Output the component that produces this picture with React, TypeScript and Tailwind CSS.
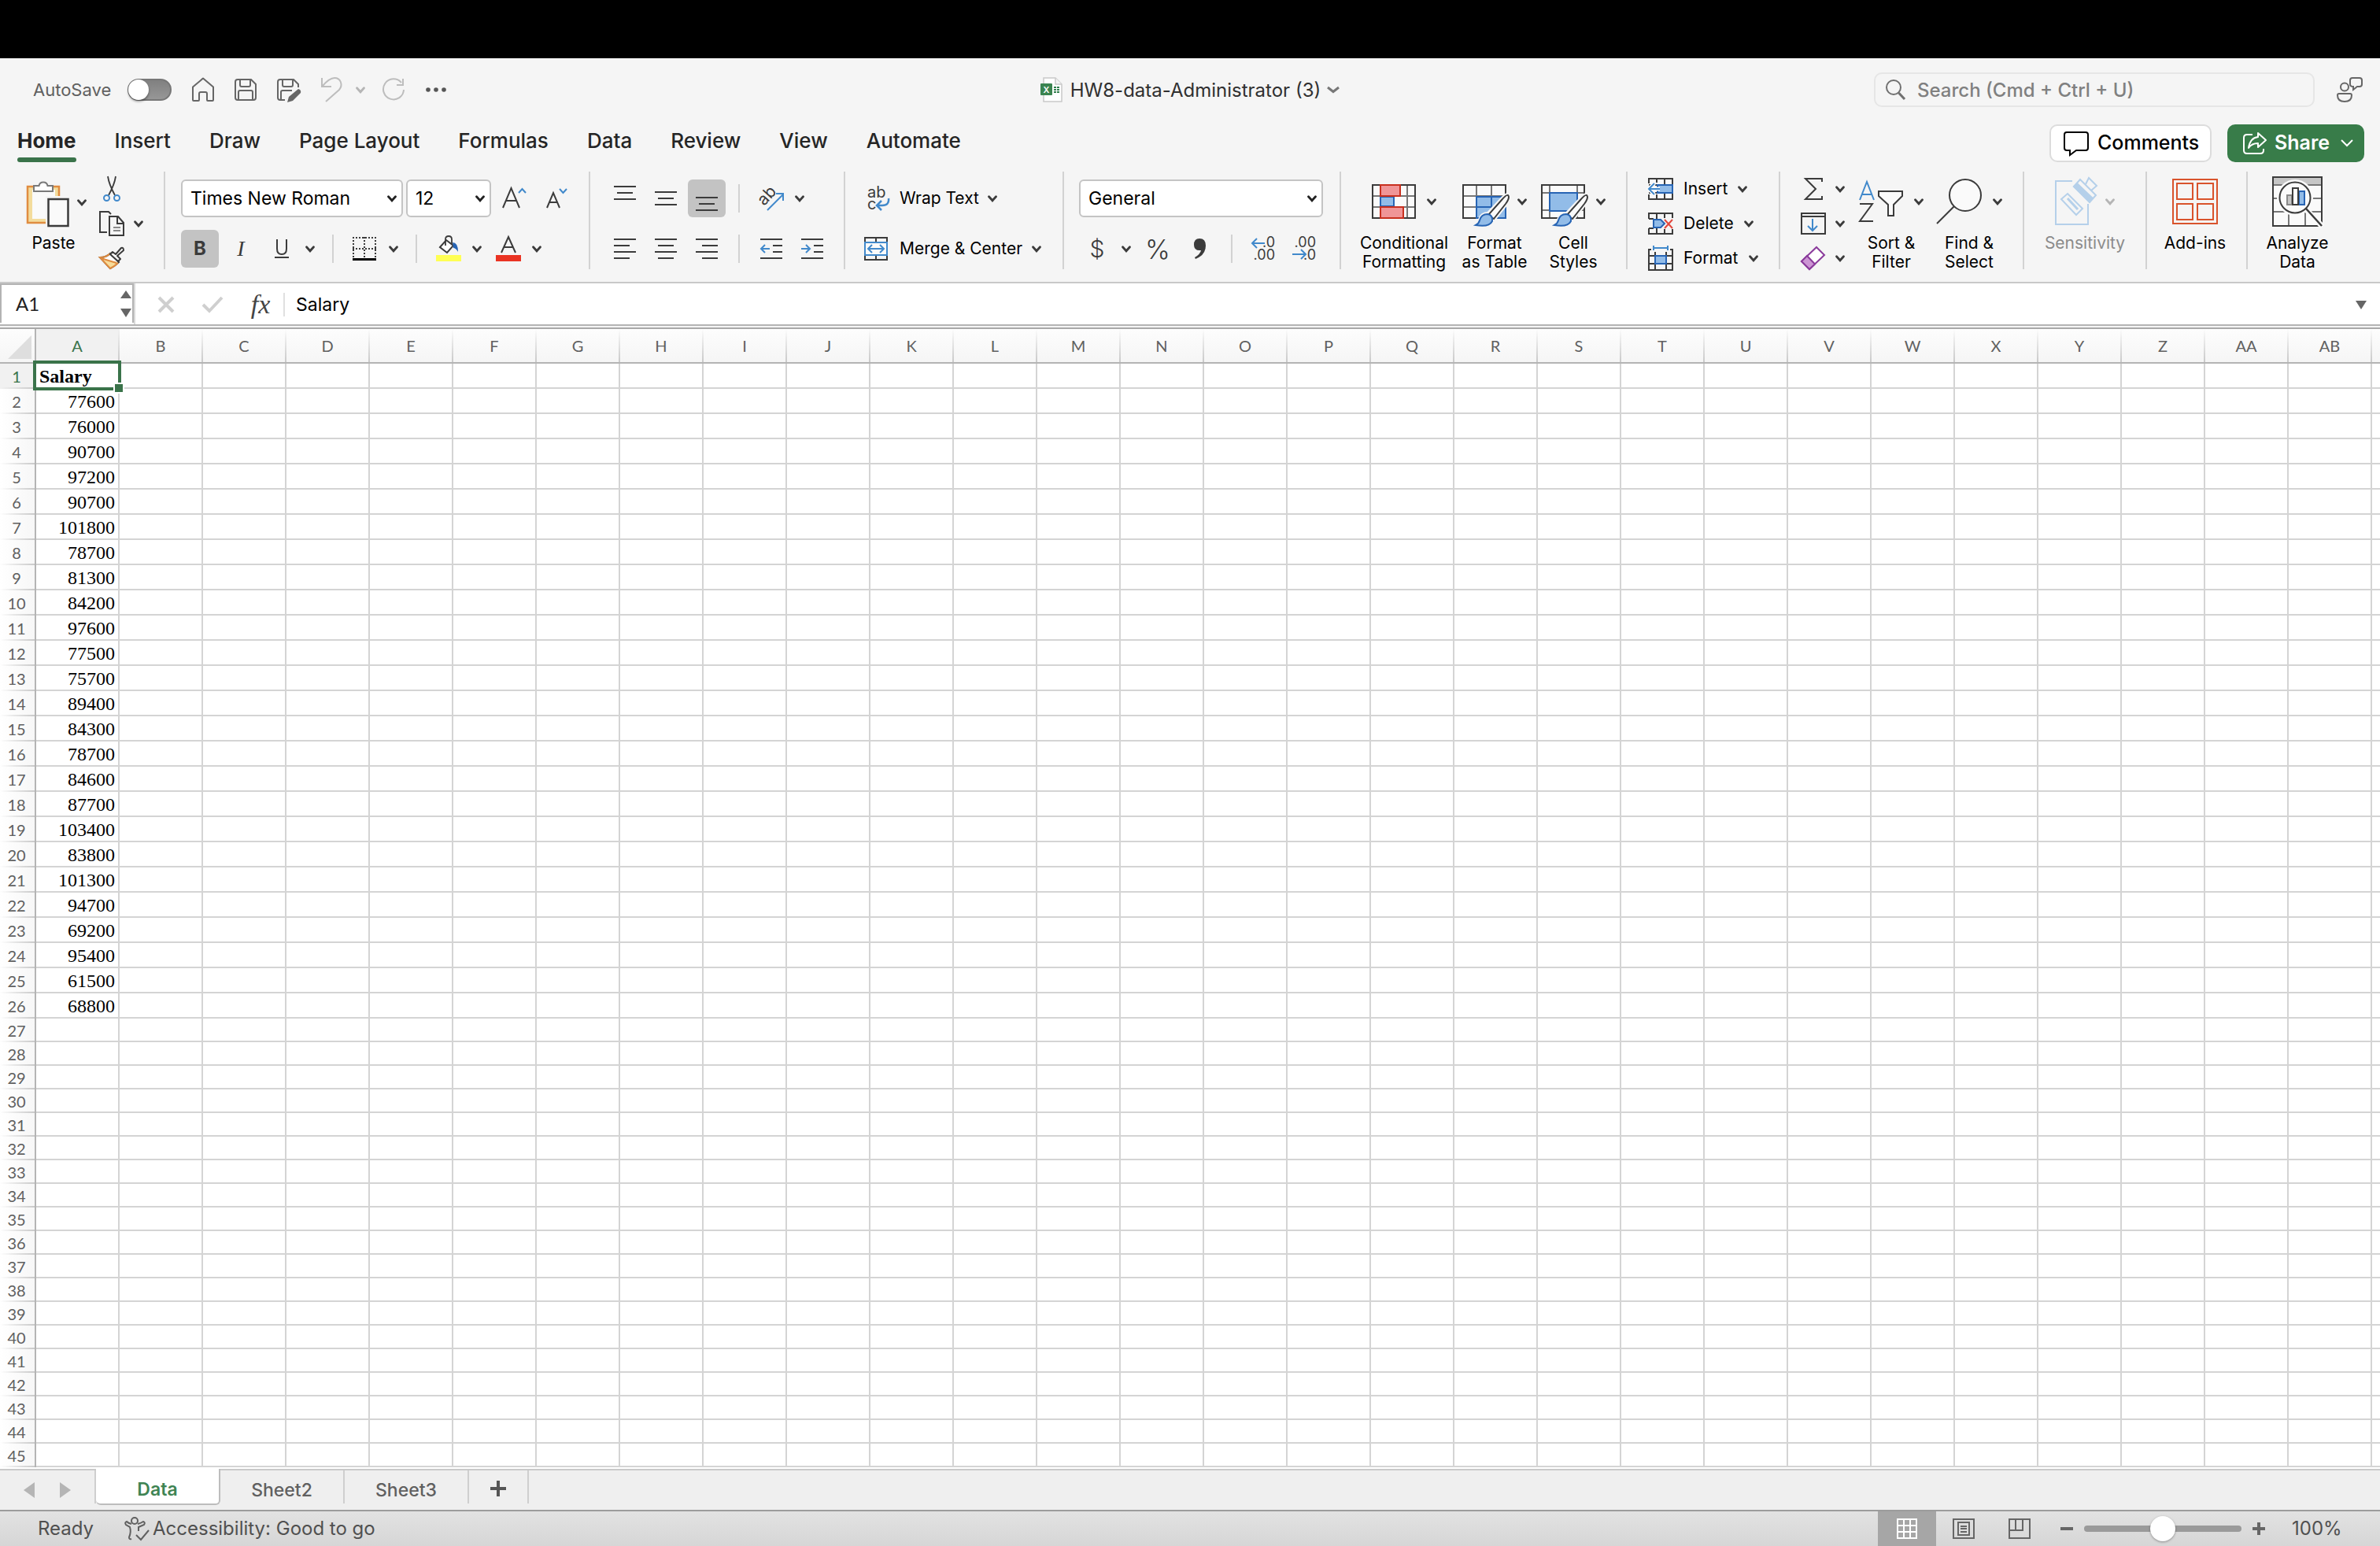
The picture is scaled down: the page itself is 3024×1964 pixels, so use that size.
import React, { useState } from "react";

const INK = "#3b3b3b";
const BLUE = "#4189cb";
const DEEP = "#2764b4";
const SKY = "#92bce8";
const GRAY = "#666666";

const salaries = [
  77600, 76000, 90700, 97200, 90700, 101800, 78700, 81300, 84200, 97600, 77500, 75700, 89400,
  84300, 78700, 84600, 87700, 103400, 83800, 101300, 94700, 69200, 95400, 61500, 68800,
];

const tabs = ["Home", "Insert", "Draw", "Page Layout", "Formulas", "Data", "Review", "View", "Automate"];
const sheets = ["Data", "Sheet2", "Sheet3"];

const columns = Array.from({ length: 28 }, (_, i) =>
  i < 26 ? String.fromCharCode(65 + i) : "A" + String.fromCharCode(65 + i - 26)
);
const rows = Array.from({ length: 45 }, (_, i) => i + 1);

interface IconProps {
  w: number;
  h: number;
  stroke?: string;
  sw?: number;
  className?: string;
  children: React.ReactNode;
}

const Icon: React.FC<IconProps> = ({ w, h, stroke = INK, sw = 2, className = "", children }) => (
  <svg
    width={w}
    height={h}
    viewBox={`0 0 ${w} ${h}`}
    fill="none"
    stroke={stroke}
    strokeWidth={sw}
    aria-hidden="true"
    className={`shrink-0 overflow-visible ${className}`}
  >
    {children}
  </svg>
);

const Chevron: React.FC<{ color?: string; className?: string }> = ({ color = INK, className = "" }) => (
  <Icon w={12} h={9} stroke={color} sw={2.8} className={className}>
    <path d="m1.500 1.800 4.500 5 4.500-5" strokeLinecap="round" />
  </Icon>
);

const Drop: React.FC<{ label: string; className?: string; color?: string }> = ({ label, className = "", color }) => (
  <button type="button" aria-label={label} className={`flex h-8 w-3 items-center ${className}`}>
    <Chevron color={color} />
  </button>
);

const Divider = () => <div className="h-[124px] w-[2px] shrink-0 bg-[#d2d2d2]" />;
const ShortDivider: React.FC<{ className?: string }> = ({ className = "" }) => (
  <div className={`h-9 w-[2px] shrink-0 bg-[#d2d2d2] ${className}`} />
);

const Lines: React.FC<{ spans: number[][] }> = ({ spans }) => (
  <Icon w={28} h={spans.length * 8 - 6} sw={2}>
    {spans.map(([a, b], i) => (
      <path key={i} d={`M${a} ${i * 8 + 1}H${b}`} />
    ))}
  </Icon>
);

const Brush = () => (
  <>
    <path d="M58 14q3 3-3 11L40 44q-2 10-12 10-8 0-14-2 9-3 9-7 2-7 10-7l17-18q6-7 8-6z" stroke="#f5f5f5" strokeWidth="6" />
    <path d="M58 14q3 3-3 11L40 44l-7-5 17-19q6-7 8-6z" fill="#fafafa" />
    <path d="M32 38q7 1 6 9-4 8-21 5 4-2 5-6 2-8 10-8z" fill={SKY} stroke={DEEP} />
  </>
);

interface ToolProps {
  label: string;
  lines: string[];
  width: string;
  chevron?: boolean;
  disabled?: boolean;
  children: React.ReactNode;
}

const BigTool: React.FC<ToolProps> = ({ label, lines, width, chevron = true, disabled, children }) => (
  <button
    type="button"
    aria-label={label}
    disabled={disabled}
    className={`flex shrink-0 flex-col items-center ${width} ${disabled ? "text-[#8b8b8b]" : "text-black"}`}
  >
    <span className="mb-[3px] flex h-[76px] items-center gap-[14px]">
      {children}
      {chevron && <Chevron color={disabled ? "#b5b5b5" : INK} />}
    </span>
    {lines.map((line) => (
      <span key={line} className="text-[21px] leading-6 whitespace-nowrap">
        {line}
      </span>
    ))}
  </button>
);

const TitleBar = () => (
  <div className="grid h-20 grid-cols-[1fr_auto_1fr] items-center">
    <div className="flex items-center pl-[42px]">
      <label htmlFor="autosave" className="w-[120px] text-[22px] text-[#606060]">
        AutoSave
      </label>
      <span className="relative flex h-7 w-14">
        <input
          id="autosave"
          type="checkbox"
          role="switch"
          className="h-7 w-14 appearance-none rounded-full border-2 border-[#777] bg-[linear-gradient(#808080,#979797)]"
        />
        <span className="pointer-events-none absolute top-px left-px h-[26px] w-[26px] rounded-full bg-white shadow-[0_2px_3px_rgba(0,0,0,0.4)]" />
      </span>
      <button type="button" aria-label="Home" className="ml-[26px]">
        <Icon w={28} h={32} stroke={GRAY}>
          <path d="M1 12.500 14 1.500l13 11V29q0 1-1 1h-6q-1 0-1-1v-8q0-2-2-2h-6q-2 0-2 2v8q0 1-1 1H2q-1 0-1-1z" strokeLinejoin="round" />
        </Icon>
      </button>
      <button type="button" aria-label="Save" className="ml-[26px]">
        <Icon w={28} h={28} stroke={GRAY}>
          <path d="M4 1h17l6 6v17q0 3-3 3H4q-3 0-3-3V4q0-3 3-3z" />
          <path d="M7 1v7q0 2 2 2h9q2 0 2-2V1M5 27V17q0-2 2-2h14q2 0 2 2v10" />
        </Icon>
      </button>
      <button type="button" aria-label="Save as" className="ml-[26px]">
        <Icon w={31} h={28} stroke={GRAY}>
          <path d="M10 27H4q-3 0-3-3V4q0-3 3-3h17l6 6v4M7 1v7q0 2 2 2h9q2 0 2-2V1M5 27V17q0-2 2-2h12" />
          <path d="M27 13q4 1 3 5l-10 10-7 2 2-7z" fill={GRAY} stroke="none" />
        </Icon>
      </button>
      <button type="button" aria-label="Undo" className="ml-[25px]">
        <Icon w={26} h={32} stroke="#bdbdbd">
          <path d="M1 1v11h12M1.500 11.500C8 4 12 1 17 1c8 0 11 9 6 15L6 31" />
        </Icon>
      </button>
      <Drop label="Undo history" color="#b5b5b5" className="ml-[18px]" />
      <button type="button" aria-label="Redo" className="ml-[22px]">
        <Icon w={28} h={28} stroke="#bdbdbd">
          <path d="M24 5A13 13 0 1 0 27 14M26 0v8h-8" />
        </Icon>
      </button>
      <button type="button" aria-label="More commands" className="ml-[26px]">
        <Icon w={28} h={8} stroke="none">
          <g fill="#555">
            <circle cx="4" cy="4" r="2.800" />
            <circle cx="14" cy="4" r="2.800" />
            <circle cx="24" cy="4" r="2.800" />
          </g>
        </Icon>
      </button>
    </div>
    <button type="button" className="flex items-center text-[24px] text-[#303030]">
      <Icon w={28} h={32} stroke="none" className="mr-[10px]">
        <path d="M4 1h15l8 8v22H4z" fill="#fff" stroke="#c9c9c9" strokeWidth="1.500" />
        <path d="M19 1v8h8" fill="#f4f4f4" stroke="#c9c9c9" strokeWidth="1.500" />
        <path d="M17 12h3v2h-3zM21 12h3v2h-3zM17 15h3v2h-3zM21 15h3v2h-3zM17 18h3v2h-3zM21 18h3v2h-3z" fill="#2f7d4c" />
        <rect y="8" width="15" height="15" rx="1" fill="#3b8450" />
        <text x="7.500" y="19.500" fontSize="11" fontWeight="600" fill="#fff" textAnchor="middle">X</text>
      </Icon>
      <span className="pt-[2px]">HW8-data-Administrator (3)</span>
      <Icon w={16} h={8} stroke="#777" sw={3} className="ml-2">
        <path d="m1 1 7 5.500L15 1" />
      </Icon>
    </button>
    <div className="flex items-center justify-end pr-[22px]">
      <label className="flex h-11 w-[560px] items-center rounded-[10px] border-2 border-[#e6e6e6] pl-3">
        <Icon w={26} h={26} stroke="#707070">
          <circle cx="11" cy="10" r="9" />
          <path d="m17.500 17 7.500 8" strokeWidth="3" />
        </Icon>
        <input
          type="search"
          aria-label="Search"
          placeholder="Search (Cmd + Ctrl + U)"
          className="ml-[15px] w-full min-w-0 bg-transparent pt-[2px] text-[24px] font-medium outline-none placeholder:text-[#808080]"
        />
      </label>
      <button type="button" aria-label="Account" className="ml-7">
        <Icon w={33} h={32} stroke={GRAY}>
          <circle cx="10" cy="12.500" r="5" />
          <path d="M3 21h14q2 0 2 2 0 8-9 8t-9-8q0-2 2-2zM20 1h9q3 0 3 3v5q0 3-3 3h-3l-5 4v-4q-4 0-4-3V4q0-3 3-3z" />
        </Icon>
      </button>
    </div>
  </div>
);

const TabBar: React.FC = () => {
  const [active, setActive] = useState("Home");
  return (
    <div className="flex h-14 justify-between pr-5 pl-[22px]">
      <nav className="flex gap-[49px]">
        {tabs.map((tab) => (
          <button
            key={tab}
            type="button"
            onClick={() => setActive(tab)}
            className={`flex h-[52px] flex-col justify-between text-[26px] leading-9 text-[#252525] ${
              tab === active ? "font-bold" : "font-medium"
            }`}
          >
            <span className="pt-[7px]">{tab}</span>
            {tab === active && <span className="h-[6px] w-full rounded-full bg-[#3a734a]" />}
          </button>
        ))}
      </nav>
      <div className="flex gap-5 pt-1">
        <button
          type="button"
          className="flex h-12 w-[206px] items-center rounded-[10px] border-2 border-[#dcdcdc] bg-white pl-4 text-[25px] font-medium text-black"
        >
          <Icon w={32} h={30} stroke="#000" className="mr-[11px]">
            <path d="M4 1h24q3 0 3 3v17q0 3-3 3H16l-8 6v-6H4q-3 0-3-3V4q0-3 3-3z" />
          </Icon>
          Comments
        </button>
        <button
          type="button"
          className="flex h-12 w-[174px] items-center rounded-[10px] bg-[#387c49] pl-5 text-[25px] font-semibold text-white"
        >
          <Icon w={30} h={28} stroke="#fff" className="mr-[10px]">
            <path d="M12 3H5Q1 3 1 7v16q0 4 4 4h17q4 0 4-4v-2" />
            <path d="M19 1l10 9-10 9v-5q-8 0-12 6Q9 7 19 6z" strokeLinejoin="round" />
          </Icon>
          <span className="w-[76px] text-left">Share</span>
          <Icon w={16} h={10} stroke="#fff" className="ml-2">
            <path d="m1 1 7 7 7-7" />
          </Icon>
        </button>
      </div>
    </div>
  );
};

const ClipboardGroup = () => (
  <div className="flex w-[208px] shrink-0 pl-[34px]">
    <button type="button" className="flex w-[76px] flex-col text-[21px] leading-6">
      <span className="flex h-[79px] items-center gap-[10px]">
        <Icon w={54} h={60} stroke="none">
          <rect x="1" y="9" width="40" height="46" fill="#f3dc9c" stroke="#e08c40" strokeWidth="2.500" />
          <rect x="7" y="13" width="29" height="37" fill="#fafafa" />
          <rect x="24" y="21" width="20" height="37" fill="#f5f5f5" />
          <rect x="27.500" y="25" width="25" height="34" fill="#fafafa" stroke={INK} strokeWidth="2.500" />
          <path d="M9 15V8h6.500a5.600 5.600 0 0 1 11 0H33v7z" fill="#fff" stroke="#7a7a7a" strokeWidth="2" />
        </Icon>
        <Chevron />
      </span>
      <span className="w-[68px] text-center">Paste</span>
    </button>
    <div className="ml-4 flex flex-col">
      <button type="button" aria-label="Cut" className="flex h-11 w-8 items-center justify-center">
        <Icon w={22} h={32} sw={1.8}>
          <path d="M6 0c1 7 3 13 9 24M16 0c-1 7-3 13-9 24" />
          <circle cx="4.500" cy="27.500" r="3.500" stroke={BLUE} strokeWidth="2" />
          <circle cx="17.500" cy="27.500" r="3.500" stroke={BLUE} strokeWidth="2" />
        </Icon>
      </button>
      <div className="flex h-11 items-center">
        <button type="button" aria-label="Copy">
          <Icon w={32} h={32}>
            <path d="M10 27H1V1h11l3 3" />
            <path d="M13 7h11l7 8v16H13zM23 7v9h8" />
            <path d="M18 21h9M18 25h9" stroke="#8a8a8a" />
          </Icon>
        </button>
        <Drop label="Copy options" className="ml-3" />
      </div>
      <button type="button" aria-label="Format painter" className="flex h-11 items-center">
        <Icon w={32} h={28}>
          <path d="M1 13q8 0 13-5l11 11q-5 5-11 8z" fill="#fff" />
          <path d="m3 16 21 3q-5 5-10 8z" fill="#f7dc9a" stroke="none" />
          <path d="m2 14 20 6M14 8Q9 13 1 13l13 14q6-3 10-7" stroke="#e08c40" />
          <path d="m14 9 3-3 4 3 7-8q3-1 3 3l-8 7 4 4-3 3z" fill="#fafafa" strokeLinejoin="round" />
        </Icon>
      </button>
    </div>
  </div>
);

const FontGroup: React.FC = () => {
  const [bold, setBold] = useState(true);
  return (
    <div className="flex w-[538px] shrink-0 flex-col gap-4 pt-[10px] pl-5">
      <div className="flex h-12 items-center">
        <div className="relative w-[282px]">
          <select
            aria-label="Font"
            className="h-12 w-full appearance-none rounded-[6px] border-2 border-[#c4c4c4] bg-white pl-[10px] text-[23px] text-black"
          >
            <option>Times New Roman</option>
          </select>
          <Chevron color="#222" className="pointer-events-none absolute top-5 right-2" />
        </div>
        <div className="relative ml-1 w-[108px]">
          <select
            aria-label="Font size"
            className="h-12 w-full appearance-none rounded-[6px] border-2 border-[#c4c4c4] bg-white pl-[10px] text-[23px] text-black"
          >
            <option>12</option>
          </select>
          <Chevron color="#222" className="pointer-events-none absolute top-5 right-2" />
        </div>
        <button type="button" aria-label="Increase font size" className="ml-[14px]">
          <Icon w={30} h={30}>
            <path d="M1 27 11.500 2 22 27M5 18h13" />
            <path d="m21 8 4.500-5L30 8" stroke={BLUE} />
          </Icon>
        </button>
        <button type="button" aria-label="Decrease font size" className="ml-[26px]">
          <Icon w={28} h={30}>
            <path d="M1 27 9 8l8 19M4 20h10" />
            <path d="m17 3 4.500 5L26 3" stroke={BLUE} />
          </Icon>
        </button>
      </div>
      <div className="flex h-12 items-center text-[#3b3b3b]">
        <button
          type="button"
          aria-pressed={bold}
          onClick={() => setBold(!bold)}
          className={`h-12 w-12 rounded-[6px] text-[24px] font-bold ${bold ? "bg-[#c3c3c3]" : ""}`}
        >
          B
        </button>
        <button type="button" className="ml-1 h-12 w-12 [font-family:'Liberation_Serif',serif] text-[28px] italic">
          I
        </button>
        <button type="button" aria-label="Underline" className="ml-1 flex h-12 w-12 items-center justify-center">
          <Icon w={18} h={24}>
            <path d="M3 0v12q0 7 6 7t6-7V0M0 23h18" />
          </Icon>
        </button>
        <Drop label="Underline options" className="ml-[6px]" />
        <ShortDivider className="ml-[22px]" />
        <button type="button" aria-label="Borders" className="ml-6">
          <Icon w={30} h={30}>
            <path d="M0 1h30M0 15h30M1 0v26M15 0v26M29 0v26" strokeDasharray="2 2" />
            <path d="M0 28.500h30" stroke="#000" strokeWidth="3" />
          </Icon>
        </button>
        <Drop label="Border options" className="ml-4" />
        <ShortDivider className="ml-[22px]" />
        <button type="button" aria-label="Fill color" className="ml-6">
          <Icon w={32} h={32}>
            <path d="m5 14 8-9 9 7-8 9z" fill="#fff" />
            <path d="M12 12V4q0-4 4-4t4 4v7" strokeWidth="1.800" />
            <path d="M21 8q7 0 7 12-3-5-6-5z" fill={DEEP} stroke="none" />
            <rect y="24" width="32" height="8" fill="#ffff54" stroke="none" />
          </Icon>
        </button>
        <Drop label="Fill color options" className="ml-[14px]" />
        <button type="button" aria-label="Font color" className="ml-[18px]">
          <Icon w={32} h={32}>
            <path d="m7 21 9-20 9 20M10.500 14h11" />
            <rect y="24" width="32" height="8" fill="#ea3323" stroke="none" />
          </Icon>
        </button>
        <Drop label="Font color options" className="ml-[14px]" />
      </div>
    </div>
  );
};

const AlignmentGroup = () => (
  <div className="flex w-[322px] shrink-0 flex-col gap-4 pt-[10px] pl-5">
    <div className="flex h-12 items-center">
      <button type="button" aria-label="Align top" className="flex h-12 w-12 justify-center pt-2">
        <Lines spans={[[0, 28], [4, 24], [0, 28]]} />
      </button>
      <button type="button" aria-label="Align middle" className="ml-1 flex h-12 w-12 items-center justify-center">
        <Lines spans={[[0, 28], [4, 24], [0, 28]]} />
      </button>
      <button
        type="button"
        aria-label="Align bottom"
        aria-pressed="true"
        className="ml-1 flex h-12 w-12 items-end justify-center rounded-[6px] bg-[#c3c3c3] pb-2"
      >
        <Lines spans={[[0, 28], [4, 24], [0, 28]]} />
      </button>
      <ShortDivider className="ml-4" />
      <button type="button" aria-label="Orientation" className="ml-6">
        <Icon w={32} h={32}>
          <text x="2" y="25" fontSize="21" fill={INK} stroke="none" transform="rotate(-48 6 20)">ab</text>
          <path d="M11 31 31 11M22 10h9v9" stroke={BLUE} />
        </Icon>
      </button>
      <Drop label="Orientation options" className="ml-[14px]" />
    </div>
    <div className="flex h-12 items-center">
      <button type="button" aria-label="Align left" className="flex h-12 w-12 items-center justify-center">
        <Lines spans={[[0, 28], [0, 20], [0, 28], [0, 20]]} />
      </button>
      <button type="button" aria-label="Align center" className="ml-1 flex h-12 w-12 items-center justify-center">
        <Lines spans={[[0, 28], [4, 24], [0, 28], [4, 24]]} />
      </button>
      <button type="button" aria-label="Align right" className="ml-1 flex h-12 w-12 items-center justify-center">
        <Lines spans={[[0, 28], [8, 28], [0, 28], [8, 28]]} />
      </button>
      <ShortDivider className="ml-4" />
      <button type="button" aria-label="Decrease indent" className="ml-[26px]">
        <Icon w={28} h={26}>
          <path d="M0 1h28M16 9h12M16 17h12M0 25h28" />
          <path d="M12 13H1M6 8l-5 5 5 5" stroke={BLUE} />
        </Icon>
      </button>
      <button type="button" aria-label="Increase indent" className="ml-6">
        <Icon w={28} h={26}>
          <path d="M0 1h28M16 9h12M16 17h12M0 25h28" />
          <path d="M0 13h11M6 8l5 5-5 5" stroke={BLUE} />
        </Icon>
      </button>
    </div>
  </div>
);

const WrapGroup = () => (
  <div className="flex w-[276px] shrink-0 flex-col gap-4 pt-[10px] pl-6 text-[21px] text-black">
    <button type="button" className="flex h-12 items-center">
      <Icon w={32} h={32}>
        <text fontSize="20" fill={INK} stroke="none">
          <tspan x="4" y="15">ab</tspan>
          <tspan x="4" y="30">c</tspan>
        </text>
        <path d="M31 16q1 9-8 9h-6M22 19l-6 6 6 6" stroke={BLUE} strokeWidth="2.500" />
      </Icon>
      <span className="ml-[13px] w-[112px] text-left whitespace-nowrap">Wrap Text</span>
      <Chevron />
    </button>
    <button type="button" className="flex h-12 items-center">
      <Icon w={30} h={30}>
        <path d="M1 7V1h28v6M1 23v6h28v-6M15 1v6M15 23v6" />
        <rect x="1" y="7" width="28" height="16" fill="#fafafa" stroke={BLUE} />
        <path d="M5 15h20M10 10l-5 5 5 5M20 10l5 5-5 5" stroke={BLUE} />
      </Icon>
      <span className="ml-[15px] w-[168px] text-left whitespace-nowrap">Merge &amp; Center</span>
      <Chevron />
    </button>
  </div>
);

const NumberGroup = () => (
  <div className="flex w-[350px] shrink-0 flex-col gap-4 pt-[10px] pl-[19px] text-[#3b3b3b]">
    <div className="relative w-[310px]">
      <select
        aria-label="Number format"
        className="h-12 w-full appearance-none rounded-[6px] border-2 border-[#c4c4c4] bg-white pl-[10px] text-[23px] text-black"
      >
        <option>General</option>
      </select>
      <Chevron color="#222" className="pointer-events-none absolute top-5 right-2" />
    </div>
    <div className="flex h-12 items-center">
      <button type="button" className="w-[46px] text-[30px] font-light">$</button>
      <Drop label="Currency options" className="ml-2" />
      <button type="button" className="ml-3 w-[44px] text-[34px] font-light">%</button>
      <button type="button" aria-label="Comma style" className="ml-[24px]">
        <Icon w={15} h={26} stroke="none">
          <path d="M7 0q8 0 8 9 0 12-13 17l-1-2q7-4 8-9-9 1-9-7Q0 0 7 0z" fill={INK} />
        </Icon>
      </button>
      <ShortDivider className="ml-8" />
      <button type="button" aria-label="Increase decimal" className="ml-6">
        <Icon w={30} h={32}>
          <text textAnchor="end" fontSize="18" fill={INK} stroke="none">
            <tspan x="30" y="14">.0</tspan>
            <tspan x="30" y="30">.00</tspan>
          </text>
          <path d="M17 9H1M7 3 1 9l6 6" stroke={BLUE} />
        </Icon>
      </button>
      <button type="button" aria-label="Decrease decimal" className="ml-[22px]">
        <Icon w={30} h={32}>
          <text textAnchor="end" fontSize="18" fill={INK} stroke="none">
            <tspan x="30" y="14">.00</tspan>
            <tspan x="30" y="30">.0</tspan>
          </text>
          <path d="M0 23h17M11 17l6 6-6 6" stroke={BLUE} />
        </Icon>
      </button>
    </div>
  </div>
);

const StylesGroup = () => (
  <div className="flex w-[362px] shrink-0 pl-5">
    <BigTool label="Conditional Formatting" lines={["Conditional", "Formatting"]} width="w-[120px]">
      <Icon w={56} h={44}>
        <rect x="1" y="1" width="54" height="42" fill="#fafafa" />
        <path d="M0 15h56M0 29h56M36 0v44M45 0v44" stroke="#777" />
        <path d="M29 16h15v12H29z" fill="#fafafa" stroke="none" />
        <rect x="11" y="16" width="17" height="12" fill={SKY} stroke={DEEP} />
        <rect x="1" y="1" width="54" height="42" />
        <path d="M11 1h25v14H11zM11 29h29v14H11z" fill="#f09597" stroke="#c8301f" />
      </Icon>
    </BigTool>
    <BigTool label="Format as Table" lines={["Format", "as Table"]} width="w-[110px]">
      <Icon w={56} h={44}>
        <rect x="1" y="1" width="54" height="42" fill="#fafafa" />
        <path d="M0 15h56M0 29h56M18 0v44M37 0v44" stroke="#777" />
        <rect x="1" y="1" width="54" height="42" />
        <path d="M18 16h37v27H18z" fill={SKY} stroke={DEEP} />
        <path d="M18 29h37M37 15v28" stroke={DEEP} />
        <Brush />
      </Icon>
    </BigTool>
    <BigTool label="Cell Styles" lines={["Cell", "Styles"]} width="w-[90px]">
      <Icon w={56} h={44}>
        <rect x="1" y="1" width="54" height="42" fill="#fafafa" />
        <path d="M0 11h56M0 33h56M11 0v44M46 0v44" stroke="#777" />
        <rect x="1" y="1" width="54" height="42" />
        <rect x="11" y="11" width="35" height="23" fill={SKY} stroke={DEEP} />
        <Brush />
      </Icon>
    </BigTool>
  </div>
);

const CellsGroup = () => (
  <div className="flex w-[192px] shrink-0 flex-col pl-[26px] text-[21px] text-black">
    <button type="button" className="flex h-11 items-center">
      <Icon w={32} h={28} className="mr-[13px]">
        <path d="M1 7V1h30v26H1v-6M11 1v5M21 1v26M11 21v6M1 9h30M1 19h30" fill="#fafafa" />
        <rect x="12" y="9" width="19" height="10" fill={SKY} stroke={DEEP} />
        <path d="M15 14H1M8 7l-7 7 7 7" stroke="#fafafa" strokeWidth="5" />
        <path d="M15 14H1M8 7l-7 7 7 7" stroke={BLUE} />
      </Icon>
      <span className="w-[69px] text-left">Insert</span>
      <Chevron />
    </button>
    <button type="button" className="flex h-11 items-center">
      <Icon w={32} h={28} className="mr-[13px]">
        <path d="M1 8V1h30v6M1 20v7h30v-6M11 1v7M21 1v6M11 20v7M21 21v6M1 8h6M1 20h6" />
        <path d="M7 9h9l5 5-5 5H7z" fill={SKY} stroke={DEEP} />
        <path d="m21 9 10 11M31 9 21 20" stroke="#e2463b" />
      </Icon>
      <span className="w-[77px] text-left">Delete</span>
      <Chevron />
    </button>
    <button type="button" className="flex h-11 items-center">
      <Icon w={32} h={32} className="mr-[13px]">
        <path d="M4 5H1v26h30V5h-3M1 13h30M1 23h30M9 8v23M23 8v23" stroke={INK} />
        <rect x="9" y="13" width="14" height="10" fill={SKY} stroke={DEEP} />
        <path d="M7 3h18M7 0v6M25 0v6" stroke={BLUE} />
      </Icon>
      <span className="w-[83px] text-left">Format</span>
      <Chevron />
    </button>
  </div>
);

const EditingGroup = () => (
  <div className="flex w-[308px] shrink-0 pl-[26px]">
    <div className="flex w-[56px] flex-col">
      <div className="flex h-11 items-center justify-between">
        <button type="button" aria-label="AutoSum" className="flex w-8 justify-center">
          <Icon w={24} h={28}>
            <path d="M23 5V1H2l13 13L2 27h21v-4" />
          </Icon>
        </button>
        <Drop label="AutoSum options" />
      </div>
      <div className="flex h-11 items-center justify-between">
        <button type="button" aria-label="Fill">
          <Icon w={32} h={28}>
            <rect x="1" y="1" width="30" height="26" />
            <path d="M1 5h30" />
            <path d="M15 8v15M9 17l6 6 6-6" stroke={BLUE} />
          </Icon>
        </button>
        <Drop label="Fill options" />
      </div>
      <div className="flex h-11 items-center justify-between">
        <button type="button" aria-label="Clear">
          <Icon w={32} h={30} stroke="#8a3a9b">
            <path d="M20 1 30 11 11 29 1 19z" fill="#fff" />
            <path d="m8 12 10 10.500-7 6.500L1 19z" fill="#cc95d4" />
          </Icon>
        </button>
        <Drop label="Clear options" />
      </div>
    </div>
    <BigTool label="Sort & Filter" lines={["Sort &", "Filter"]} width="ml-[9px] w-[100px]">
      <Icon w={56} h={52}>
        <path d="m1 24 9-23 9 23M4 17h12" stroke={BLUE} />
        <path d="M1 29h16L1 51h17" />
        <path d="M25 13h30v6L44 30v14h-7V30L25 19z" fill="#fafafa" />
      </Icon>
    </BigTool>
    <BigTool label="Find & Select" lines={["Find &", "Select"]} width="w-[98px]">
      <Icon w={58} h={58}>
        <circle cx="37" cy="21" r="20" fill="#fafafa" />
        <path d="M23 35 1 57" />
      </Icon>
    </BigTool>
  </div>
);

const Ribbon = () => (
  <div className="flex h-[150px] overflow-hidden border-b-2 border-[#c9c9c9] pt-2">
    <ClipboardGroup />
    <Divider />
    <FontGroup />
    <Divider />
    <AlignmentGroup />
    <Divider />
    <WrapGroup />
    <Divider />
    <NumberGroup />
    <Divider />
    <StylesGroup />
    <Divider />
    <CellsGroup />
    <Divider />
    <EditingGroup />
    <Divider />
    <div className="flex w-[154px] shrink-0 justify-center">
      <BigTool label="Sensitivity" lines={["Sensitivity"]} width="w-[120px]" disabled>
        <Icon w={50} h={60} stroke="#b5d0ea">
          <path d="M22 4H1v55h41V33" />
          <path d="m16 20 19 19-8 8L8 27z" />
          <path d="m16 26 13 14" strokeWidth="3" />
          <path d="m32 2 20 20-8 9-20-20z" fill="#f5f5f5" />
          <path d="m24 11 4-4 20 19-4 4z" fill="#b5d0ea" />
          <path d="m39 8 4-8 10 10-7 6" />
        </Icon>
      </BigTool>
    </div>
    <Divider />
    <div className="flex w-[126px] shrink-0 justify-center pr-1">
      <BigTool label="Add-ins" lines={["Add-ins"]} width="w-[120px]" chevron={false}>
        <Icon w={58} h={58} stroke="#d9532c">
          <path d="M1 1h56v56H1zM6 6h20v20H6zM32 6h20v20H32zM6 32h20v20H6zM32 32h20v20H32z" />
        </Icon>
      </BigTool>
    </div>
    <Divider />
    <div className="flex w-[126px] shrink-0 justify-center">
      <BigTool label="Analyze Data" lines={["Analyze", "Data"]} width="w-[120px]" chevron={false}>
        <Icon w={64} h={64}>
          <rect x="1" y="1" width="62" height="62" fill="#fafafa" />
          <rect x="2" y="2" width="60" height="8" fill="#c6c6c6" stroke="none" />
          <path d="M1 11h62M1 28h62M1 45h62M21 45v18M42 45v18" stroke="#777" />
          <rect x="1" y="1" width="62" height="62" />
          <path d="m44 43 20 21" stroke="#fafafa" strokeWidth="7" />
          <circle cx="29" cy="27" r="23" fill="#fafafa" stroke="none" />
          <circle cx="29" cy="27" r="19.500" fill="#fafafa" />
          <path d="M19 24h6v12h-6z" fill="#c6c6c6" stroke="#8a8a8a" />
          <path d="M34 19h7v17h-7z" fill={SKY} stroke={DEEP} />
          <path d="M26 15h7v21h-7z" fill="#fff" />
          <path d="m43 41 20 22" strokeWidth="2.500" />
        </Icon>
      </BigTool>
    </div>
  </div>
);

const FormulaBar = () => (
  <div className="flex h-[58px] items-start border-b-2 border-[#a9a9a9] bg-[linear-gradient(#fff_52px,#b4b4b4_52px,#b4b4b4_54px,#f5f5f5_54px)]">
    <div className="flex h-[50px] w-[170px] items-center justify-between border-2 border-b-0 border-[#b3b3b3] bg-white">
      <input
        aria-label="Name box"
        defaultValue="A1"
        className="w-[120px] bg-transparent pl-[18px] [font-family:Lato,sans-serif] text-[24px] text-[#222] outline-none"
      />
      <button type="button" aria-label="Cell names" className="mr-px">
        <Icon w={14} h={34} stroke="none">
          <path d="M7 0l7 10H0zM0 23h14L7 34z" fill="#666" />
        </Icon>
      </button>
    </div>
    <div className="h-[52px] w-[2px] bg-[#d9d9d9]" />
    <div className="flex h-[52px] flex-1 items-center pt-[2px] pr-[17px]">
      <button type="button" aria-label="Cancel" className="ml-7">
        <Icon w={22} h={22} stroke="#cfcfcf" sw={4}>
          <path d="m2 2 18 18M20 2 2 20" />
        </Icon>
      </button>
      <button type="button" aria-label="Enter" className="ml-[34px]">
        <Icon w={28} h={22} stroke="#cfcfcf" sw={4}>
          <path d="m2 11 8 8L26 2" />
        </Icon>
      </button>
      <button
        type="button"
        aria-label="Insert function"
        className="ml-[33px] w-7 [font-family:'Liberation_Serif',serif] text-[34px] leading-none text-[#444] italic"
      >
        fx
      </button>
      <div className="ml-[15px] h-[30px] w-[2px] bg-[#e0e0e0]" />
      <input
        aria-label="Formula"
        defaultValue="Salary"
        className="ml-[14px] min-w-0 flex-1 bg-transparent text-[23px] text-black outline-none"
      />
      <button type="button" aria-label="Expand formula bar">
        <Icon w={14} h={11} stroke="none">
          <path d="M0 0h14L7 11z" fill="#666" />
        </Icon>
      </button>
    </div>
  </div>
);

const Grid = () => (
  <div className="min-h-0 flex-1 overflow-hidden bg-white">
    <table className="w-full table-fixed border-separate border-spacing-0">
      <colgroup>
        <col className="w-[46px]" />
        {columns.map((c) => (
          <col key={c} className="w-[106px]" />
        ))}
        <col />
      </colgroup>
      <thead className="[font-family:Lato,sans-serif] text-[20px] text-[#606060]">
        <tr className="h-11 bg-[linear-gradient(#fdfdfd,#f5f5f5)]">
          <th className="border-r-2 border-b-2 border-[#b4b4b4] p-0">
            <Icon w={30} h={30} stroke="none" className="mt-1 ml-[10px]">
              <path d="M30 0v30H0z" fill="#dedede" />
            </Icon>
          </th>
          {columns.map((c) => (
            <th
              key={c}
              scope="col"
              className={`relative border-b-2 border-[#b4b4b4] p-0 pr-[2px] font-normal after:absolute after:top-0 after:right-0 after:h-full after:w-[2px] after:bg-linear-to-b after:from-transparent after:to-[#cacaca] ${
                c === "A" ? "bg-[#f1f1f1] text-[#3a734a]" : ""
              }`}
            >
              {c}
            </th>
          ))}
          <td className="border-b-2 border-[#b4b4b4]" />
        </tr>
      </thead>
      <tbody>
        {rows.map((r) => (
          <tr key={r} className={r > 26 ? "h-[30px]" : "h-8"}>
            <th
              scope="row"
              className={`relative border-r-2 border-[#b4b4b4] p-0 pr-[2px] [font-family:Lato,sans-serif] text-[20px] leading-[26px] font-normal after:absolute after:bottom-0 after:left-0 after:h-[2px] after:w-full after:bg-linear-to-r after:from-transparent after:to-[#cacaca] ${
                r === 1 ? "bg-[#f1f1f1] text-[#3a734a]" : "bg-[linear-gradient(to_right,#fff,#f7f7f7)] text-[#606060]"
              }`}
            >
              {r}
            </th>
            {columns.map((c) => (
              <td
                key={c}
                className={`relative border-r-2 border-b-2 border-[#d4d4d4] p-0 ${
                  c === "A" && r <= 26
                    ? "px-1 pt-[2px] [font-family:'Liberation_Serif',serif] text-[24px] leading-[28px] text-black"
                    : ""
                } ${r === 1 ? "text-left font-bold" : "text-right"}`}
              >
                {c === "A" && r === 1 && (
                  <>
                    Salary
                    <span className="absolute -top-1 -right-1 -bottom-1 -left-1 z-10 border-4 border-[#3a734a]" />
                    <span className="absolute -right-2 -bottom-2 z-10 h-[14px] w-[14px] border-2 border-white bg-[#3a734a]" />
                  </>
                )}
                {c === "A" && r > 1 && salaries[r - 2]}
              </td>
            ))}
            <td className="border-b-2 border-[#d4d4d4]" />
          </tr>
        ))}
      </tbody>
    </table>
  </div>
);

const SheetBar: React.FC = () => {
  const [sheet, setSheet] = useState("Data");
  return (
    <div className="flex h-[52px] shrink-0 border-t-2 border-[#c9c9c9] bg-[#efefef]">
      <div className="flex h-[42px] w-[122px] items-center gap-8 border-r-2 border-[#cfcfcf] pt-2 pl-[30px]">
        <button type="button" aria-label="Previous sheet">
          <Icon w={14} h={20} stroke="none">
            <path d="M14 0v20L0 10z" fill="#b5b5b5" />
          </Icon>
        </button>
        <button type="button" aria-label="Next sheet">
          <Icon w={14} h={20} stroke="none">
            <path d="M0 0v20l14-10z" fill="#b5b5b5" />
          </Icon>
        </button>
      </div>
      {sheets.map((name) => (
        <button
          key={name}
          type="button"
          onClick={() => setSheet(name)}
          className={`w-[158px] border-r-2 text-[23px] ${
            name === sheet
              ? "-mt-[2px] h-[46px] rounded-b-[6px] border-b-2 border-[#bdbdbd] bg-white pt-2 font-semibold text-[#3f8453]"
              : "h-[42px] border-[#cfcfcf] pt-2 font-medium text-[#606060]"
          }`}
        >
          {name}
        </button>
      ))}
      <button
        type="button"
        aria-label="New sheet"
        className="flex h-[42px] w-[76px] items-center justify-center border-r-2 border-[#cfcfcf] pt-1"
      >
        <Icon w={20} h={20} stroke="#555" sw={4}>
          <path d="M10 0v20M0 10h20" />
        </Icon>
      </button>
    </div>
  );
};

const StatusBar = () => (
  <footer className="flex h-[46px] shrink-0 items-center justify-between border-t-2 border-[#9c9c9c] bg-[linear-gradient(#e2e2e2,#d6d6d6)] text-[24px] text-[#505050]">
    <div className="flex items-center pl-12">
      <span className="w-[110px]">Ready</span>
      <button type="button" className="flex items-center whitespace-nowrap">
        <Icon w={34} h={30} stroke="#606060" sw={2} className="mr-[2px]">
          <circle cx="13" cy="5" r="4" />
          <path d="M17 9q4-1 7-3 3 1 1 4l-7 3v5M9 9Q5 8 3 6 0 7 2 10l5 3q2 6-1 13 0 3 3 2M15 23l6 6 10-12" />
        </Icon>
        Accessibility: Good to go
      </button>
    </div>
    <div className="flex h-full items-center pr-[48px]">
      <button type="button" aria-label="Normal view" className="flex h-full w-[74px] items-center justify-center bg-[#a6a6a6]">
        <Icon w={26} h={26} stroke="#fff">
          <path d="M1 1h24v24H1zM1 9h24M1 17h24M9 1v24M17 1v24" />
        </Icon>
      </button>
      <button type="button" aria-label="Page layout view" className="ml-[21px]">
        <Icon w={28} h={26} stroke="#666">
          <path d="M1 1h26v24H1zM7 5h14v16H7zM10 10h8M10 13h8M10 17h8" />
        </Icon>
      </button>
      <button type="button" aria-label="Page break view" className="ml-[43px]">
        <Icon w={28} h={26} stroke="#666">
          <path d="M1 1h26v24H1zM1 15h17V1M9 1v14" />
        </Icon>
      </button>
      <button type="button" aria-label="Zoom out" className="ml-[38px]">
        <Icon w={16} h={16} stroke="#666" sw={4}>
          <path d="M0 8h16" />
        </Icon>
      </button>
      <input
        type="range"
        aria-label="Zoom"
        defaultValue={50}
        className="mx-[14px] h-2 w-[200px] appearance-none rounded-full bg-[#9a9a9a] [&::-webkit-slider-thumb]:h-8 [&::-webkit-slider-thumb]:w-8 [&::-webkit-slider-thumb]:appearance-none [&::-webkit-slider-thumb]:rounded-full [&::-webkit-slider-thumb]:bg-white [&::-webkit-slider-thumb]:shadow-[0_1px_3px_rgba(0,0,0,0.35)]"
      />
      <button type="button" aria-label="Zoom in">
        <Icon w={16} h={16} stroke="#666" sw={4}>
          <path d="M0 8h16M8 0v16" />
        </Icon>
      </button>
      <span className="ml-[34px] w-[64px] whitespace-nowrap">100%</span>
    </div>
  </footer>
);

const App: React.FC = () => (
  <div className="flex h-screen flex-col overflow-hidden bg-[#f5f5f5] [font-family:Inter,sans-serif]">
    <div className="h-[74px] shrink-0 bg-black" />
    <header className="shrink-0">
      <TitleBar />
      <TabBar />
      <Ribbon />
      <FormulaBar />
    </header>
    <Grid />
    <SheetBar />
    <StatusBar />
  </div>
);

export default App;
